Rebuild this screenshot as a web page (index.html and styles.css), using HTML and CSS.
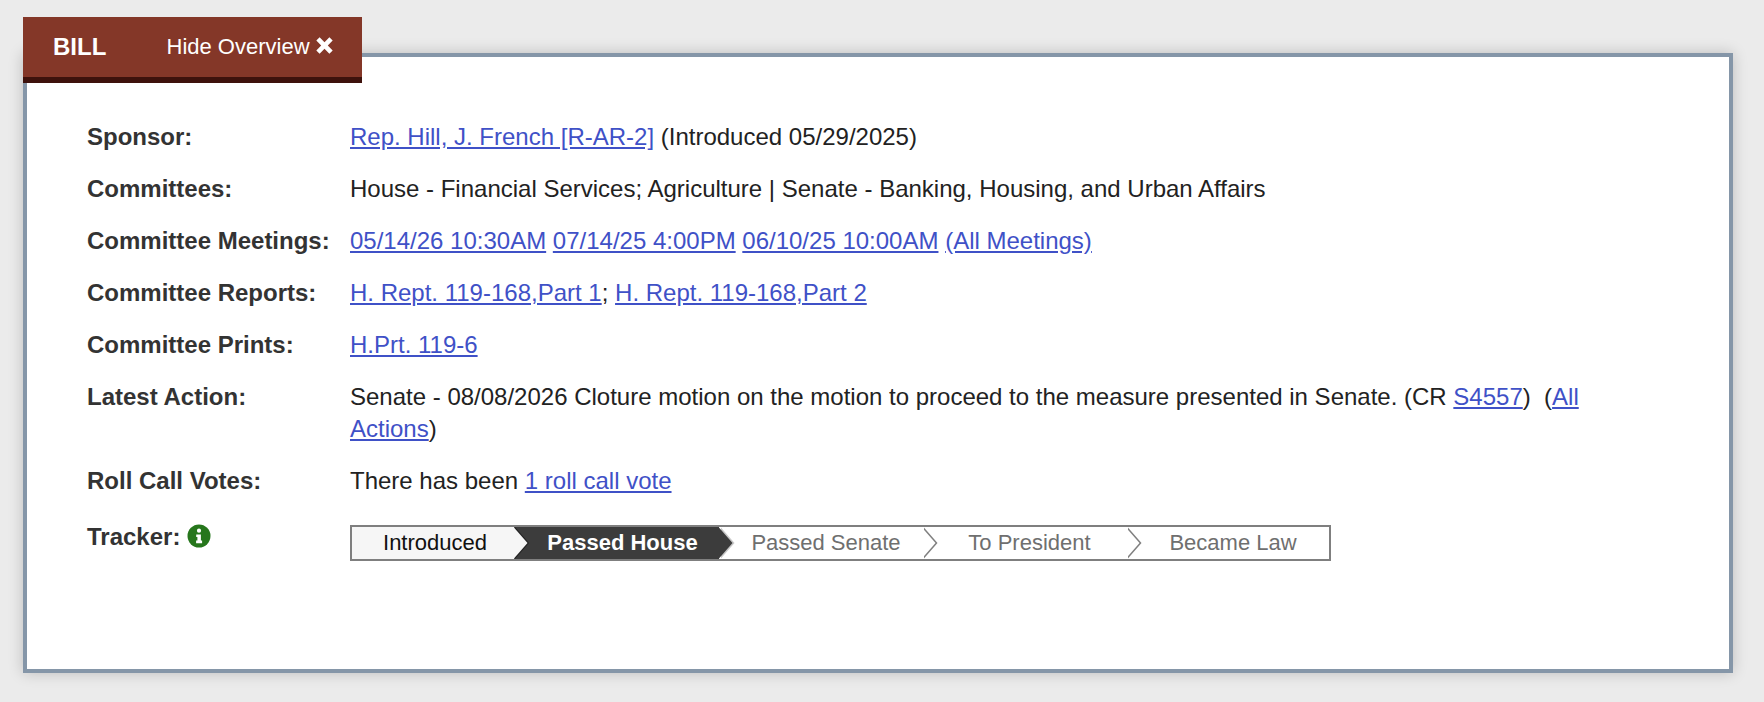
FILE: index.html
```html
<!DOCTYPE html>
<html lang="en">
<head>
<meta charset="utf-8">
<title>Bill overview</title>
<link rel="stylesheet" href="styles.css">
</head>
<body>
<main class="card">
  <div class="tab">
    <span class="tab-title">BILL</span>
    <span class="tab-toggle">Hide Overview
      <svg class="tab-x" viewBox="0 0 16 16" aria-hidden="true"><path d="M0.300 3.400 3.400 0.300 8 4.900 12.600 0.300 15.700 3.400 11.100 8 15.700 12.600 12.600 15.700 8 11.100 3.400 15.700 0.300 12.600 4.900 8Z"/></svg>
    </span>
  </div>
  <dl class="overview">
    <dt>Sponsor:</dt>
    <dd><a href="#">Rep. Hill, J. French [R-AR-2]</a> (Introduced 05/29/2025)</dd>
    <dt>Committees:</dt>
    <dd>House - Financial Services; Agriculture | Senate - Banking, Housing, and Urban Affairs</dd>
    <dt>Committee Meetings:</dt>
    <dd><a href="#">05/14/26 10:30AM</a> <a href="#">07/14/25 4:00PM</a> <a href="#">06/10/25 10:00AM</a> <a href="#">(All Meetings)</a></dd>
    <dt>Committee Reports:</dt>
    <dd><a href="#">H. Rept. 119-168,Part 1</a>; <a href="#">H. Rept. 119-168,Part 2</a></dd>
    <dt>Committee Prints:</dt>
    <dd><a href="#">H.Prt. 119-6</a></dd>
    <dt>Latest Action:</dt>
    <dd>Senate - 08/08/2026 Cloture motion on the motion to proceed to the measure presented in Senate. (CR <a href="#">S4557</a>)&nbsp; (<a href="#">All Actions</a>)</dd>
    <dt>Roll Call Votes:</dt>
    <dd>There has been <a href="#">1 roll call vote</a></dd>
    <dt class="tracker-label">Tracker:
      <svg class="info" viewBox="0 0 24 24" aria-hidden="true"><circle cx="12" cy="12" r="11.500"/><path class="info-i" d="M12 4.600a2.100 2.100 0 1 1 0 4.200 2.100 2.100 0 0 1 0-4.200ZM9.200 10.400h4.700v6.200h1.200v2.600H9.100v-2.600h1.300v-3.600H9.200Z"/></svg>
    </dt>
    <dd class="tracker-cell">
      <ol class="tracker">
        <li class="step step-done">Introduced</li>
        <li class="step step-current">Passed House</li>
        <li class="step">Passed Senate</li>
        <li class="step">To President</li>
        <li class="step step-last">Became Law</li>
      </ol>
    </dd>
  </dl>
</main>
</body>
</html>
```
FILE: styles.css
```css
* { box-sizing: border-box; }
html, body { margin: 0; height: 702px; overflow: hidden; }
body {
  background: #ebebeb;
  padding: 53px 31px 0 23px;
  font-family: "Liberation Sans", Arial, sans-serif;
  color: #222;
}
.card {
  position: relative;
  height: 620px;
  background: #fff;
  border: 4px solid #8596a8;
  box-shadow: 0 0 14px rgba(0, 0, 0, 0.2);
  padding: 64px 136px 0 60px;
}
.tab {
  position: absolute;
  left: -4px;
  top: -40px;
  width: 339px;
  height: 66px;
  background: #843728;
  border-bottom: 6px solid #3e120c;
  color: #fff;
  display: flex;
  align-items: center;
  padding: 0 0 0 30px;
}
.tab-title { font-size: 24px; font-weight: 700; width: 113.5px; }
.tab-toggle { font-size: 22px; display: flex; align-items: center; gap: 6px; }
.tab-x { width: 17px; height: 17px; fill: #fff; margin-top: -3px; }
.overview {
  margin: 0;
  display: grid;
  grid-template-columns: 263px 1fr;
  row-gap: 20px;
  font-size: 24px;
  line-height: 32px;
}
.overview dt { font-weight: 700; color: #333; }
.overview dd { margin: 0; }
.overview a { color: #3f51c7; text-decoration: underline; }
.tracker-label { display: flex; align-items: center; gap: 7px; height: 32px; margin-top: 4px; }
.info { width: 24px; height: 24px; margin-top: -2px; }
.info circle { fill: #26761c; }
.info-i { fill: #fff; }
.tracker-cell { padding-top: 8px; }
.tracker {
  list-style: none;
  margin: 0;
  padding: 0;
  width: 981px;
  height: 36px;
  border: 2px solid #7f7f7f;
  display: grid;
  grid-template-columns: 162px 205px 203px 204px 1fr;
  font-size: 22px;
  line-height: 32px;
  color: #6f6f6f;
  overflow: hidden;
}
.step { position: relative; text-align: center; padding-left: 11px; }
.step-done { background: #f6f6f6; color: #111; padding-left: 4px; }
.step-current { background: #3c3c3c; color: #fff; font-weight: 700; padding-left: 12px; }
.step::before,
.step::after {
  content: "";
  position: absolute;
  top: 0;
  bottom: 0;
  width: 14px;
  clip-path: polygon(0 0, 100% 50%, 0 100%);
}
.step::before { z-index: 1; left: calc(100% + 1.500px); background: #7f7f7f; }
.step::after { z-index: 2; left: calc(100% - 0.500px); background: #fff; }
.step-done::before { left: calc(100% + 1px); background: #222; }
.step-done::after { background: #f6f6f6; }
.step-current::before { background: #c8c8c8; }
.step-current::after { background: #3c3c3c; }
.step-last::before,
.step-last::after { display: none; }
```
